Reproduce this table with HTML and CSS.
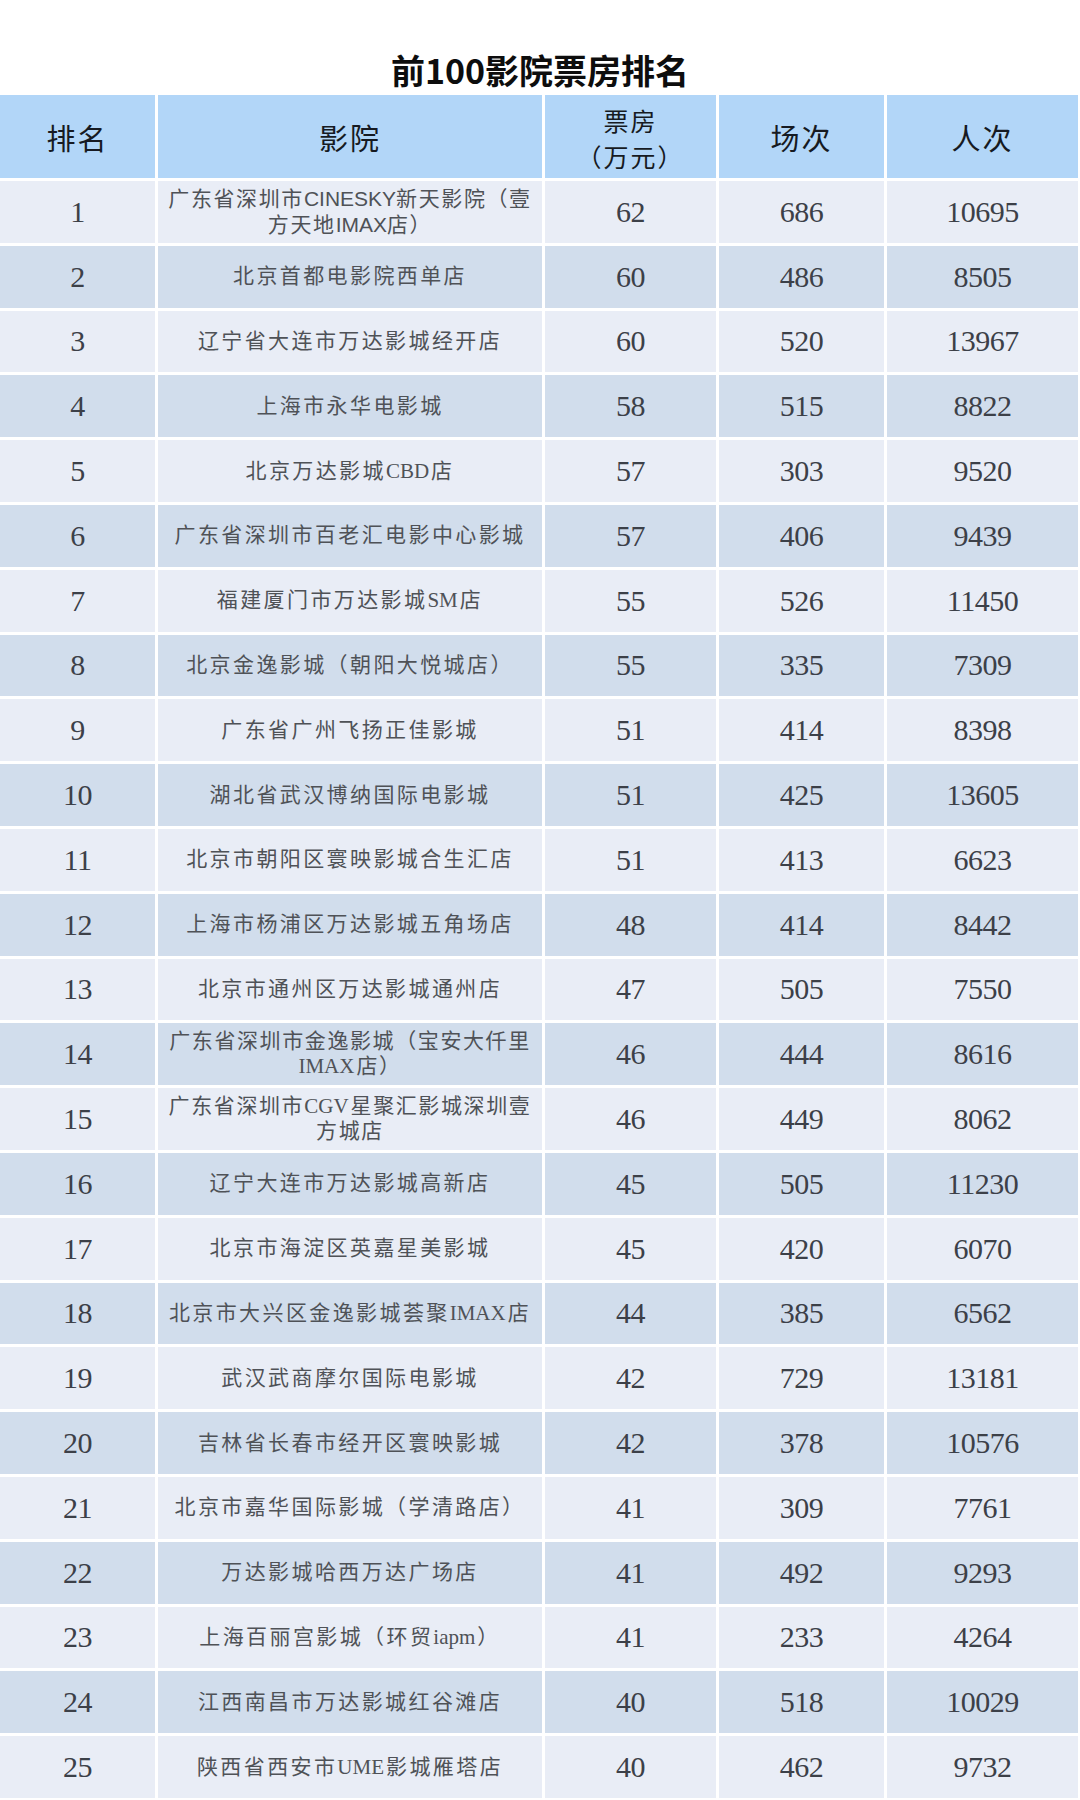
FILE: index.html
```html
<!DOCTYPE html>
<html lang="zh-CN">
<head>
<meta charset="utf-8">
<title>前100影院票房排名</title>
<link rel="stylesheet" href="styles.css">
</head>
<body>
<div class="page">
  <h1 class="title">前100影院票房排名</h1>
  <div class="table">
    <div class="row head">
      <div class="cell"><span class="txt">排名</span></div>
      <div class="cell"><span class="txt">影院</span></div>
      <div class="cell two"><span class="txt">票房<br>（万元）</span></div>
      <div class="cell"><span class="txt">场次</span></div>
      <div class="cell"><span class="txt">人次</span></div>
    </div>
    <div class="row odd"><div class="cell num">1</div><div class="cell name tight"><span class="txt">广东省深圳市<span class="sans">CINESKY</span>新天影院（壹<br>方天地<span class="sans">IMAX</span>店）</span></div><div class="cell num">62</div><div class="cell num">686</div><div class="cell num">10695</div></div>
    <div class="row even"><div class="cell num">2</div><div class="cell name"><span class="txt">北京首都电影院西单店</span></div><div class="cell num">60</div><div class="cell num">486</div><div class="cell num">8505</div></div>
    <div class="row odd"><div class="cell num">3</div><div class="cell name"><span class="txt">辽宁省大连市万达影城经开店</span></div><div class="cell num">60</div><div class="cell num">520</div><div class="cell num">13967</div></div>
    <div class="row even"><div class="cell num">4</div><div class="cell name"><span class="txt">上海市永华电影城</span></div><div class="cell num">58</div><div class="cell num">515</div><div class="cell num">8822</div></div>
    <div class="row odd"><div class="cell num">5</div><div class="cell name"><span class="txt">北京万达影城<span class="lat">CBD</span>店</span></div><div class="cell num">57</div><div class="cell num">303</div><div class="cell num">9520</div></div>
    <div class="row even"><div class="cell num">6</div><div class="cell name"><span class="txt">广东省深圳市百老汇电影中心影城</span></div><div class="cell num">57</div><div class="cell num">406</div><div class="cell num">9439</div></div>
    <div class="row odd"><div class="cell num">7</div><div class="cell name"><span class="txt">福建厦门市万达影城<span class="lat">SM</span>店</span></div><div class="cell num">55</div><div class="cell num">526</div><div class="cell num">11450</div></div>
    <div class="row even"><div class="cell num">8</div><div class="cell name"><span class="txt">北京金逸影城（朝阳大悦城店）</span></div><div class="cell num">55</div><div class="cell num">335</div><div class="cell num">7309</div></div>
    <div class="row odd"><div class="cell num">9</div><div class="cell name"><span class="txt">广东省广州飞扬正佳影城</span></div><div class="cell num">51</div><div class="cell num">414</div><div class="cell num">8398</div></div>
    <div class="row even"><div class="cell num">10</div><div class="cell name"><span class="txt">湖北省武汉博纳国际电影城</span></div><div class="cell num">51</div><div class="cell num">425</div><div class="cell num">13605</div></div>
    <div class="row odd"><div class="cell num">11</div><div class="cell name"><span class="txt">北京市朝阳区寰映影城合生汇店</span></div><div class="cell num">51</div><div class="cell num">413</div><div class="cell num">6623</div></div>
    <div class="row even"><div class="cell num">12</div><div class="cell name"><span class="txt">上海市杨浦区万达影城五角场店</span></div><div class="cell num">48</div><div class="cell num">414</div><div class="cell num">8442</div></div>
    <div class="row odd"><div class="cell num">13</div><div class="cell name"><span class="txt">北京市通州区万达影城通州店</span></div><div class="cell num">47</div><div class="cell num">505</div><div class="cell num">7550</div></div>
    <div class="row even"><div class="cell num">14</div><div class="cell name tight"><span class="txt">广东省深圳市金逸影城（宝安大仟里<br><span class="lat">IMAX</span>店）</span></div><div class="cell num">46</div><div class="cell num">444</div><div class="cell num">8616</div></div>
    <div class="row odd"><div class="cell num">15</div><div class="cell name tight"><span class="txt">广东省深圳市<span class="lat">CGV</span>星聚汇影城深圳壹<br>方城店</span></div><div class="cell num">46</div><div class="cell num">449</div><div class="cell num">8062</div></div>
    <div class="row even"><div class="cell num">16</div><div class="cell name"><span class="txt">辽宁大连市万达影城高新店</span></div><div class="cell num">45</div><div class="cell num">505</div><div class="cell num">11230</div></div>
    <div class="row odd"><div class="cell num">17</div><div class="cell name"><span class="txt">北京市海淀区英嘉星美影城</span></div><div class="cell num">45</div><div class="cell num">420</div><div class="cell num">6070</div></div>
    <div class="row even"><div class="cell num">18</div><div class="cell name"><span class="txt">北京市大兴区金逸影城荟聚<span class="lat">IMAX</span>店</span></div><div class="cell num">44</div><div class="cell num">385</div><div class="cell num">6562</div></div>
    <div class="row odd"><div class="cell num">19</div><div class="cell name"><span class="txt">武汉武商摩尔国际电影城</span></div><div class="cell num">42</div><div class="cell num">729</div><div class="cell num">13181</div></div>
    <div class="row even"><div class="cell num">20</div><div class="cell name"><span class="txt">吉林省长春市经开区寰映影城</span></div><div class="cell num">42</div><div class="cell num">378</div><div class="cell num">10576</div></div>
    <div class="row odd"><div class="cell num">21</div><div class="cell name"><span class="txt">北京市嘉华国际影城（学清路店）</span></div><div class="cell num">41</div><div class="cell num">309</div><div class="cell num">7761</div></div>
    <div class="row even"><div class="cell num">22</div><div class="cell name"><span class="txt">万达影城哈西万达广场店</span></div><div class="cell num">41</div><div class="cell num">492</div><div class="cell num">9293</div></div>
    <div class="row odd"><div class="cell num">23</div><div class="cell name"><span class="txt">上海百丽宫影城（环贸<span class="lat">iapm</span>）</span></div><div class="cell num">41</div><div class="cell num">233</div><div class="cell num">4264</div></div>
    <div class="row even"><div class="cell num">24</div><div class="cell name"><span class="txt">江西南昌市万达影城红谷滩店</span></div><div class="cell num">40</div><div class="cell num">518</div><div class="cell num">10029</div></div>
    <div class="row odd"><div class="cell num">25</div><div class="cell name"><span class="txt">陕西省西安市<span class="lat">UME</span>影城雁塔店</span></div><div class="cell num">40</div><div class="cell num">462</div><div class="cell num">9732</div></div>
  </div>
</div>
</body>
</html>
```

FILE: styles.css
```css
html, body {
  margin: 0;
  padding: 0;
  background: #ffffff;
}

.page {
  width: 1080px;
}

.title {
  margin: 0;
  height: 95px;
  box-sizing: border-box;
  padding-top: 50px;
  text-align: center;
  font-family: "Noto Sans CJK SC", "Noto Sans", sans-serif;
  font-weight: 700;
  font-size: 34px;
  line-height: 40px;
  color: #0d0d0d;
}

.table {
  width: 1078px;
  display: flex;
  flex-direction: column;
  gap: 3px;
  background: #ffffff;
}

.row {
  display: grid;
  grid-template-columns: 155px 384px 171px 165px 191px;
  column-gap: 3px;
  height: 61.8px;
}

.row.head {
  height: 83px;
}

.cell {
  display: flex;
  align-items: center;
  justify-content: center;
  text-align: center;
  font-family: "Liberation Serif", "Noto Sans CJK SC", serif;
  color: #3c4048;
}

.txt {
  display: block;
  white-space: nowrap;
}

.head .cell {
  background: #b2d6f8;
  font-family: "Noto Sans CJK SC", sans-serif;
  font-weight: 400;
  font-size: 29px;
  letter-spacing: 2px;
  color: #161a22;
}

.head .cell.two {
  line-height: 36px;
  font-size: 25px;
  padding-top: 2px;
}

.odd .cell {
  background: #e9edf6;
}

.even .cell {
  background: #d1ddec;
}

.num {
  font-size: 30px;
  letter-spacing: -0.5px;
}

.name {
  font-size: 21px;
  letter-spacing: 2.4px;
  line-height: 25px;
  color: #4f5257;
}

.name.tight {
  letter-spacing: 1.6px;
}

.lat {
  letter-spacing: 0;
  margin-right: 2px;
}

.sans {
  font-family: "Liberation Sans", "Noto Sans", sans-serif;
  letter-spacing: 0;
}
```
